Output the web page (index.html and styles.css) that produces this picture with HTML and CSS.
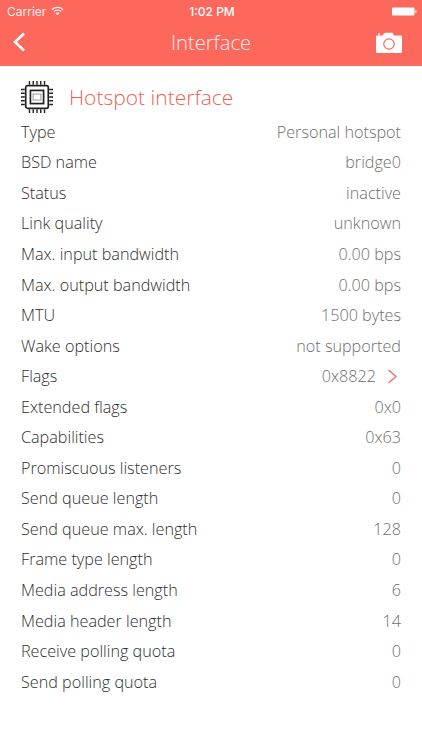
FILE: index.html
```html
<!DOCTYPE html>
<html lang="en">
<head>
<meta charset="utf-8">
<title>Interface</title>
<link rel="stylesheet" href="styles.css">
</head>
<body>
<div class="header">
  <div class="status">
    <div class="status-left"><span>Carrier</span>
      <svg class="wifi" viewBox="0 0 14 10" width="13" height="10"><path d="M1 3.6a8.500 8.500 0 0 1 12 0" fill="none" stroke="#fff" stroke-width="1.400"/><path d="M3.100 5.600a5.500 5.500 0 0 1 7.800 0" fill="none" stroke="#fff" stroke-width="1.400"/><path d="M5 7.500a2.800 2.800 0 0 1 4 0L7 9.600z" fill="#fff"/></svg>
    </div>
    <div class="status-time">1:02 PM</div>
    <div class="status-right">
      <svg viewBox="0 0 25 9" width="25" height="9"><rect x="0" y="0.500" width="22.500" height="8" rx="1" fill="#fff"/><rect x="23.200" y="3" width="1.300" height="3" fill="#fff" opacity=".8"/></svg>
    </div>
  </div>
  <div class="nav">
    <svg class="back" viewBox="0 0 14 20" width="14" height="20"><path d="M12 1.500 3 10l9 8.500" fill="none" stroke="#fff" stroke-width="2.600"/></svg>
    <div class="nav-title">Interface</div>
    <svg class="camera" viewBox="0 0 26 21" width="26" height="21"><path fill-rule="evenodd" fill="#fff" d="M1 3.500h5.500L8.500.800h8l1.600 2.700H25a1 1 0 0 1 1 1V20a1 1 0 0 1-1 1H1a1 1 0 0 1-1-1V4.500a1 1 0 0 1 1-1zM13 6.200a5.800 5.800 0 1 0 0 11.600 5.800 5.800 0 0 0 0-11.600zM13 7.400a4.600 4.600 0 1 1 0 9.200 4.600 4.600 0 0 1 0-9.200z"/><circle cx="3" cy="1.900" r=".9" fill="#fff"/></svg>
  </div>
</div>
<div class="section-head">
  <svg class="chip" viewBox="0 0 34 34" width="34" height="34" fill="none" stroke="#222">
    <rect x="5" y="5" width="24" height="24" rx="2" stroke-width="1.800"/>
    <rect x="10" y="10" width="14" height="14" stroke-width="1.800"/>
    <rect x="12.800" y="13.800" width="8.400" height="6.400" stroke-width=".8" stroke="#777"/>
    <path stroke-width="1.500" d="M9 0v4M13 0v4M17 0v4M21 0v4M25 0v4M9 30v4M13 30v4M17 30v4M21 30v4M25 30v4M0 9h4M0 13h4M0 17h4M0 21h4M0 25h4M30 9h4M30 13h4M30 17h4M30 21h4M30 25h4"/>
  </svg>
  <h1 class="section-title">Hotspot interface</h1>
</div>
<div class="rows">
  <div class="row"><span>Type</span><span class="val">Personal hotspot</span></div>
  <div class="row"><span>BSD name</span><span class="val">bridge0</span></div>
  <div class="row"><span>Status</span><span class="val">inactive</span></div>
  <div class="row"><span>Link quality</span><span class="val">unknown</span></div>
  <div class="row"><span>Max. input bandwidth</span><span class="val">0.00 bps</span></div>
  <div class="row"><span>Max. output bandwidth</span><span class="val">0.00 bps</span></div>
  <div class="row"><span>MTU</span><span class="val">1500 bytes</span></div>
  <div class="row"><span>Wake options</span><span class="val">not supported</span></div>
  <div class="row"><span>Flags</span><span class="val val-link">0x8822<svg class="chev" viewBox="0 0 11 15" width="11" height="15"><path d="M1.500 1 9 7.500 1.500 14" fill="none" stroke="#f0685c" stroke-width="1.300"/></svg></span></div>
  <div class="row"><span>Extended flags</span><span class="val">0x0</span></div>
  <div class="row"><span>Capabilities</span><span class="val">0x63</span></div>
  <div class="row"><span>Promiscuous listeners</span><span class="val">0</span></div>
  <div class="row"><span>Send queue length</span><span class="val">0</span></div>
  <div class="row"><span>Send queue max. length</span><span class="val">128</span></div>
  <div class="row"><span>Frame type length</span><span class="val">0</span></div>
  <div class="row"><span>Media address length</span><span class="val">6</span></div>
  <div class="row"><span>Media header length</span><span class="val">14</span></div>
  <div class="row"><span>Receive polling quota</span><span class="val">0</span></div>
  <div class="row"><span>Send polling quota</span><span class="val">0</span></div>
</div>
</body>
</html>
```
FILE: styles.css
```css
* { box-sizing: border-box; }
html, body { margin: 0; padding: 0; }
body { width: 422px; height: 750px; overflow: hidden; background: #fff; font-family: "Open Sans", sans-serif; font-weight: 300; color: #333; }
.header { height: 66px; background: #fd685c; color: #fff; display: flex; flex-direction: column; }
.status { height: 22px; display: grid; grid-template-columns: 1fr auto 1fr; align-items: center; padding: 0 5px 0 7px; font-family: Inter, "Liberation Sans", sans-serif; font-weight: 400; font-size: 12px; }
.status-left { display: flex; align-items: center; gap: 5px; opacity: .9; }
.status-time { font-weight: 500; }
.status-right { display: flex; justify-content: flex-end; }
.nav { flex: 1; display: flex; align-items: center; justify-content: space-between; padding: 0 20px 4px 12px; position: relative; }
.nav-title { font-size: 20.200px; position: absolute; left: 0; right: 0; text-align: center; opacity: .9; }
.section-head { display: flex; align-items: center; gap: 16px; padding: 11px 0 0 21px; height: 50.500px; opacity: .999; }
.chip { width: 32px; height: 32px; flex: none; }
.section-title { margin: 0; font-size: 21px; font-weight: 300; color: #ee5f54; }
.rows { padding: 0 21px; opacity: .999; }
.row { height: 30.560px; display: flex; justify-content: space-between; align-items: center; font-size: 16.200px; color: #2e2e2e; }
.val { color: #6e6e6e; }
.val-link { display: flex; align-items: center; gap: 11px; padding-right: 3px; }
```
